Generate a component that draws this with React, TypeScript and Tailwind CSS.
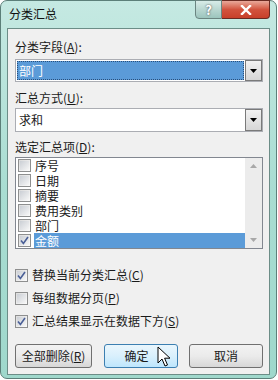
import React from 'react';

const font = { fontFamily: '"Noto Sans CJK SC", "Noto Sans", sans-serif' };

function Check({ checked }: { checked?: boolean }) {
  return (
    <span className="flex h-[13px] w-[13px] shrink-0 items-center justify-center border border-[#8e8f8f] bg-gradient-to-br from-[#dcdcdc] to-[#fbfbfb]">
      <span className="flex h-[9px] w-[9px] items-center justify-center bg-gradient-to-br from-[#cbcfd5] to-[#f6f6f6]">
        {checked && (
          <svg width="9" height="9" viewBox="0 0 9 9">
            <path d="M1 4.5 L3.4 7.5 L8 1" fill="none" stroke="#4a5f97" strokeWidth="1.6" />
          </svg>
        )}
      </span>
    </span>
  );
}

function Arrow() {
  return (
    <span className="flex h-full w-[17px] items-center justify-center border border-[#7a7a7a] bg-gradient-to-b from-[#f2f2f2] to-[#d6d6d6]">
      <svg width="7" height="4" viewBox="0 0 7 4">
        <path d="M0 0 H7 L3.5 4 Z" fill="#000" />
      </svg>
    </span>
  );
}

function Button({ label, hot, wide }: { label: React.ReactNode; hot?: boolean; wide?: boolean }) {
  return (
    <div
      className={
        'relative flex h-[24px] items-center justify-center rounded-[3px] border text-[12px] text-[#1a1a1a] ' +
        (wide ? 'w-[77px] ' : 'w-[74px] ') +
        (hot
          ? 'border-[#3c7fb1] bg-gradient-to-b from-[#eaf6fd] via-[#d9f0fc] to-[#bee6fd]'
          : 'border-[#707070] bg-gradient-to-b from-[#f2f2f2] via-[#ebebeb] to-[#d7d7d7]')
      }
    >
      {label}
    </div>
  );
}

const items = ['序号', '日期', '摘要', '费用类别', '部门', '金额'];

export default function App() {
  return (
    <div className="h-[380px] w-[278px] overflow-hidden bg-white" style={font}>
      <div className="flex h-[379px] w-[277px] flex-col rounded-[7px] border border-[#5c7f79] bg-gradient-to-b from-[#c5e9e2] via-[#a9ddd2] to-[#9fd8cc] pl-[6px] pr-[6px] pb-[3px]">
        <div className="flex h-[27px] shrink-0 items-start justify-between">
          <span className="pl-[2px] pt-[6px] text-[12px] leading-[14px] text-[#111]">分类汇总</span>
          <div className="-mt-px flex h-[19px]">
            <div className="flex w-[27px] items-center justify-center rounded-bl-[4px] border border-[#6b8581] bg-gradient-to-b from-[#d8ece8] via-[#b9d7d1] to-[#9cc5bd] text-[13px] font-bold leading-none text-white [text-shadow:0_0_2px_#333]">
              ?
            </div>
            <div className="flex w-[48px] items-center justify-center rounded-br-[4px] border border-l-0 border-[#6a2a22] bg-gradient-to-b from-[#e8a89a] via-[#d2533e] to-[#c8402a]">
              <svg width="12" height="10" viewBox="0 0 12 10">
                <path d="M2 1 L10 9 M10 1 L2 9" stroke="#fff" strokeWidth="2.4" strokeLinecap="square" />
              </svg>
            </div>
          </div>
        </div>
        <div className="flex flex-1 flex-col border border-[#6c8d87] bg-[#f0f0f0] pl-[7px] pr-[6px] text-[12px] leading-[14px] text-[#1a1a1a]">
          <div className="mt-[11px]">
            分类字段(<span className="underline">A</span>):
          </div>
          <div className="mt-[5px] flex h-[23px] border border-[#abadb3] bg-white">
            <div className="m-px flex flex-1 items-center border border-dotted border-[#2a4f7a] bg-[#5b9bd8] pl-[1px] text-white">
              部门
            </div>
            <Arrow />
          </div>
          <div className="mt-[9px]">
            汇总方式(<span className="underline">U</span>):
          </div>
          <div className="mt-[3px] flex h-[24px] border border-[#abadb3] bg-white">
            <div className="flex flex-1 items-center pl-[3px]">求和</div>
            <Arrow />
          </div>
          <div className="mt-[8px]">
            选定汇总项(<span className="underline">D</span>):
          </div>
          <div className="mt-[3px] flex h-[92px] border border-[#828790] bg-white">
            <div className="flex flex-1 flex-col pl-[2px]">
              {items.map((it, i) => (
                <div key={it} className="flex h-[15px] items-center gap-[3px] overflow-hidden">
                  <Check checked={i === 5} />
                  <span
                    className={
                      'h-[15px] flex-1 overflow-hidden pl-[1px] text-[12px] leading-[15px] ' +
                      (i === 5 ? 'bg-[#5b9bd8] text-white' : '')
                    }
                  >
                    {it}
                  </span>
                </div>
              ))}
            </div>
            <div className="flex w-[17px] flex-col items-center justify-between bg-[#ececec] py-[6px]">
              <svg width="7" height="4" viewBox="0 0 7 4">
                <path d="M0 4 H7 L3.5 0 Z" fill="#a8a8a8" />
              </svg>
              <svg width="7" height="4" viewBox="0 0 7 4">
                <path d="M0 0 H7 L3.5 4 Z" fill="#a8a8a8" />
              </svg>
            </div>
          </div>
          <div className="mt-[19px] flex items-center gap-[4px]">
            <Check checked />
            <span>替换当前分类汇总(<span className="underline">C</span>)</span>
          </div>
          <div className="mt-[9px] flex items-center gap-[4px]">
            <Check />
            <span>每组数据分页(<span className="underline">P</span>)</span>
          </div>
          <div className="mt-[9px] flex items-center gap-[4px]">
            <Check checked />
            <span>汇总结果显示在数据下方(<span className="underline">S</span>)</span>
          </div>
          <div className="mt-[16px] flex justify-between">
            <Button wide label={<span>全部删除(<span className="underline">R</span>)</span>} />
            <div className="relative">
              <Button hot label={<span className="-ml-[8px]">确定</span>} />
              <svg className="absolute left-[53px] top-[2px]" width="14" height="22" viewBox="0 0 14 22">
                <path d="M1 1 L1 17 L5 13 L8 20 L10.5 19 L7.6 12.2 L13 12.2 Z" fill="#fff" stroke="#000" strokeWidth="1" strokeLinejoin="round" />
              </svg>
            </div>
            <Button label="取消" />
          </div>
        </div>
      </div>
    </div>
  );
}
